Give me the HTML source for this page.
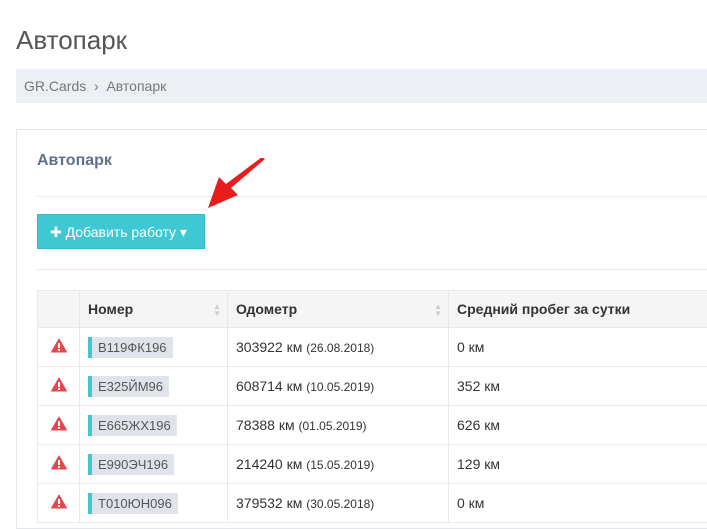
<!DOCTYPE html>
<html><head><meta charset="utf-8"><style>
*{margin:0;padding:0;box-sizing:border-box}
body{width:707px;height:504px;overflow:hidden;background:#fff;font-family:"Liberation Sans",sans-serif;color:#333;position:relative}
h1{position:absolute;left:16px;top:25px;font-size:26px;font-weight:normal;color:#555}
.bc{position:absolute;left:16px;top:69px;width:691px;height:34px;background:#eceff3;font-size:14px;color:#777;padding:9px 8px}
.panel{position:absolute;left:16px;top:129px;width:700px;height:400px;border:1px solid #e4e7ea}
.pt{position:absolute;left:37px;top:152px;font-size:16px;font-weight:bold;color:#5f7189}
.hr{position:absolute;left:37px;width:670px;height:1px;background:#e7eaec}
.btn{position:absolute;left:37px;top:214px;width:168px;height:35px;background:#3ec8d3;border:1px solid #35b9c4;color:#fff;font-size:14px;padding:9px 0 0 12px}
table{position:absolute;left:37px;top:290px;border-collapse:collapse;font-size:14px;table-layout:fixed;width:690px}
td,th{border:1px solid #e7eaec;height:39px;padding:0 8px;text-align:left}
th{background:#f5f5f5;height:37px;font-weight:bold;color:#333;position:relative}
.sort{position:absolute;right:6px;top:12px;color:#ccc;font-size:8px;line-height:7px}
.pl{display:inline-block;background:#e0e4ea;border-left:4px solid #3ec8d3;padding:3px 6px;font-size:13px;color:#555;line-height:15px}
small{font-size:12px}
.w{text-align:center;padding:0}
</style></head><body>
<h1>Автопарк</h1>
<div class="bc">GR.Cards &nbsp;›&nbsp; Автопарк</div>
<div class="panel"></div>
<div class="pt">Автопарк</div>
<div class="hr" style="top:196px"></div>
<div class="hr" style="top:269px"></div>
<div class="btn">✚ Добавить работу ▾</div>
<svg style="position:absolute;left:205px;top:158px" width="62" height="52"><path d="M60 1 L26 30 L33 37 L3 50 L14 19 L21 26 L57 -1Z" fill="#e81c1c"/></svg>
<table>
<colgroup><col style="width:42px"><col style="width:148px"><col style="width:221px"><col style="width:279px"></colgroup>
<tr><th></th><th>Номер<span class="sort">▲<br>▼</span></th><th>Одометр<span class="sort">▲<br>▼</span></th><th>Средний пробег за сутки<span class="sort">▲<br>▼</span></th></tr>
<tr><td class="w"><svg width="16" height="15"><path d="M8 1 L15.5 14 L0.5 14Z" fill="#e5474f" stroke="#e5474f" stroke-linejoin="round"/><rect x="7" y="5" width="2" height="5" fill="#fff"/><rect x="7" y="11" width="2" height="2" fill="#fff"/></svg></td><td><span class="pl">В119ФК196</span></td><td>303922 км <small>(26.08.2018)</small></td><td>0 км</td></tr>
<tr><td class="w"><svg width="16" height="15"><path d="M8 1 L15.5 14 L0.5 14Z" fill="#e5474f" stroke="#e5474f" stroke-linejoin="round"/><rect x="7" y="5" width="2" height="5" fill="#fff"/><rect x="7" y="11" width="2" height="2" fill="#fff"/></svg></td><td><span class="pl">Е325ЙМ96</span></td><td>608714 км <small>(10.05.2019)</small></td><td>352 км</td></tr>
<tr><td class="w"><svg width="16" height="15"><path d="M8 1 L15.5 14 L0.5 14Z" fill="#e5474f" stroke="#e5474f" stroke-linejoin="round"/><rect x="7" y="5" width="2" height="5" fill="#fff"/><rect x="7" y="11" width="2" height="2" fill="#fff"/></svg></td><td><span class="pl">Е665ЖХ196</span></td><td>78388 км <small>(01.05.2019)</small></td><td>626 км</td></tr>
<tr><td class="w"><svg width="16" height="15"><path d="M8 1 L15.5 14 L0.5 14Z" fill="#e5474f" stroke="#e5474f" stroke-linejoin="round"/><rect x="7" y="5" width="2" height="5" fill="#fff"/><rect x="7" y="11" width="2" height="2" fill="#fff"/></svg></td><td><span class="pl">Е990ЭЧ196</span></td><td>214240 км <small>(15.05.2019)</small></td><td>129 км</td></tr>
<tr><td class="w"><svg width="16" height="15"><path d="M8 1 L15.5 14 L0.5 14Z" fill="#e5474f" stroke="#e5474f" stroke-linejoin="round"/><rect x="7" y="5" width="2" height="5" fill="#fff"/><rect x="7" y="11" width="2" height="2" fill="#fff"/></svg></td><td><span class="pl">Т010ЮН096</span></td><td>379532 км <small>(30.05.2018)</small></td><td>0 км</td></tr>
</table>
</body></html>
